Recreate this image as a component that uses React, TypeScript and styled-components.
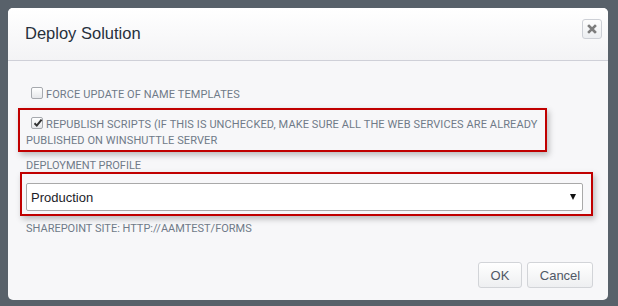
import React from 'react';
import styled, { createGlobalStyle } from 'styled-components';

const GlobalStyle = createGlobalStyle`
  * {
    box-sizing: border-box;
    margin: 0;
    padding: 0;
  }

  body {
    font-family: 'Roboto', 'Liberation Sans', Arial, sans-serif;
    background-color: #58616a;
    -webkit-font-smoothing: antialiased;
  }
`;

const Backdrop = styled.div`
  width: 618px;
  height: 306px;
  padding: 8px 10px 6px 8px;
  background-color: #58616a;
`;

const Modal = styled.div`
  width: 600px;
  height: 292px;
  background-color: #f7f7f9;
  border-radius: 5px;
  display: flex;
  flex-direction: column;
  overflow: hidden;
`;

const Header = styled.div`
  height: 53px;
  flex-shrink: 0;
  display: flex;
  align-items: flex-start;
  justify-content: space-between;
  padding: 11px 6px 0 17px;
  background: linear-gradient(to bottom, #ffffff 0%, #f3f3f5 100%);
  border-bottom: 1px solid #cfd0d8;
`;

const Title = styled.h3`
  font-family: 'Liberation Sans', Arial, sans-serif;
  font-size: 16.5px;
  font-weight: normal;
  line-height: 20px;
  margin-top: 4px;
  color: #27303c;
`;

const CloseButton = styled.button`
  width: 20px;
  height: 20px;
  display: flex;
  align-items: center;
  justify-content: center;
  border: 1px solid #cdd0d6;
  border-radius: 3px;
  background: linear-gradient(to bottom, #fdfdfd 0%, #eceef1 100%);
`;

const Body = styled.div`
  flex: 1;
  display: flex;
  flex-direction: column;
  padding: 26px 15px 0 18px;
`;

const OptionRow = styled.label`
  display: block;
  font-size: 11px;
  line-height: 16px;
  color: #6f7a88;
  text-transform: uppercase;
  letter-spacing: 0.1px;
`;

const Check = styled.span<{ $checked?: boolean }>`
  display: inline-block;
  width: 12px;
  height: 12px;
  margin: 0 3px 0 5px;
  vertical-align: top;
  border: 1px solid #a6a9ae;
  border-radius: 2px;
  background: linear-gradient(to bottom, #ffffff 0%, #e6e7ea 100%);
  position: relative;

  & svg {
    position: absolute;
    left: 1px;
    top: 0px;
    display: ${p => (p.$checked ? 'block' : 'none')};
  }
`;

const Highlight = styled.div<{ $width?: string }>`
  border: 2px solid #c00000;
  box-shadow: 2px 3px 6px rgba(0, 0, 0, 0.25);
  ${p => (p.$width ? `width: ${p.$width};` : '')}
`;

const ScriptsBox = styled(Highlight)`
  margin: 5px 0 0 -8px;
  padding: 7px 6px 1px 6px;
`;

const ProfileBox = styled(Highlight)`
  margin: 0 0 0 -6px;
  padding: 9px 8px 3px 4px;
`;

const FieldLabel = styled.div`
  font-size: 11px;
  line-height: 12px;
  color: #6f7a88;
  text-transform: uppercase;
`;

const ProfileLabel = styled(FieldLabel)`
  margin-top: 8px;
`;

const SiteLabel = styled(FieldLabel)`
  margin-top: 7px;
`;

const Select = styled.div`
  height: 28px;
  display: flex;
  align-items: center;
  justify-content: space-between;
  padding: 0 6px 0 4px;
  background-color: #ffffff;
  border: 1px solid #a9a9a9;
  border-radius: 2px;
  font-family: 'Liberation Sans', Arial, sans-serif;
  font-size: 13px;
  color: #1c1c28;
`;

const Footer = styled.div`
  display: flex;
  justify-content: flex-end;
  gap: 5px;
  padding: 27px 15px 12px 0;
`;

const Button = styled.button<{ $w: number }>`
  width: ${p => p.$w}px;
  height: 26px;
  border: 1px solid #d2d4d8;
  border-radius: 3px;
  background: linear-gradient(to bottom, #ffffff 0%, #eeeff1 100%);
  font-family: 'Liberation Sans', Arial, sans-serif;
  font-size: 13px;
  color: #505866;
`;

const CheckMark = () => (
  <svg width="10" height="10" viewBox="0 0 10 10">
    <path d="M1.5 5.2 L3.8 7.6 L8.6 1.6" fill="none" stroke="#333" strokeWidth="2" />
  </svg>
);

const App: React.FC = () => {
  return (
    <>
      <GlobalStyle />
      <Backdrop>
        <Modal>
          <Header>
            <Title>Deploy Solution</Title>
            <CloseButton aria-label="Close">
              <svg width="10" height="10" viewBox="0 0 10 10">
                <path d="M2 2 L8 8 M8 2 L2 8" stroke="#7d7d7d" strokeWidth="2.6" strokeLinecap="square" />
              </svg>
            </CloseButton>
          </Header>
          <Body>
            <OptionRow>
              <Check />
              Force update of name templates
            </OptionRow>
            <ScriptsBox $width="529px">
              <OptionRow>
                <Check $checked>
                  <CheckMark />
                </Check>
                Republish scripts (If this is unchecked, make sure all the web services are already
                published on Winshuttle server
              </OptionRow>
            </ScriptsBox>
            <ProfileLabel>Deployment profile</ProfileLabel>
            <ProfileBox>
              <Select>
                <span>Production</span>
                <svg width="6" height="6" viewBox="0 0 6 6">
                  <path d="M0 0 L6 0 L3 6 Z" fill="#111" />
                </svg>
              </Select>
            </ProfileBox>
            <SiteLabel>SharePoint site: http://aamtest/forms</SiteLabel>
          </Body>
          <Footer>
            <Button $w={44}>OK</Button>
            <Button $w={66}>Cancel</Button>
          </Footer>
        </Modal>
      </Backdrop>
    </>
  );
};

export default App;
